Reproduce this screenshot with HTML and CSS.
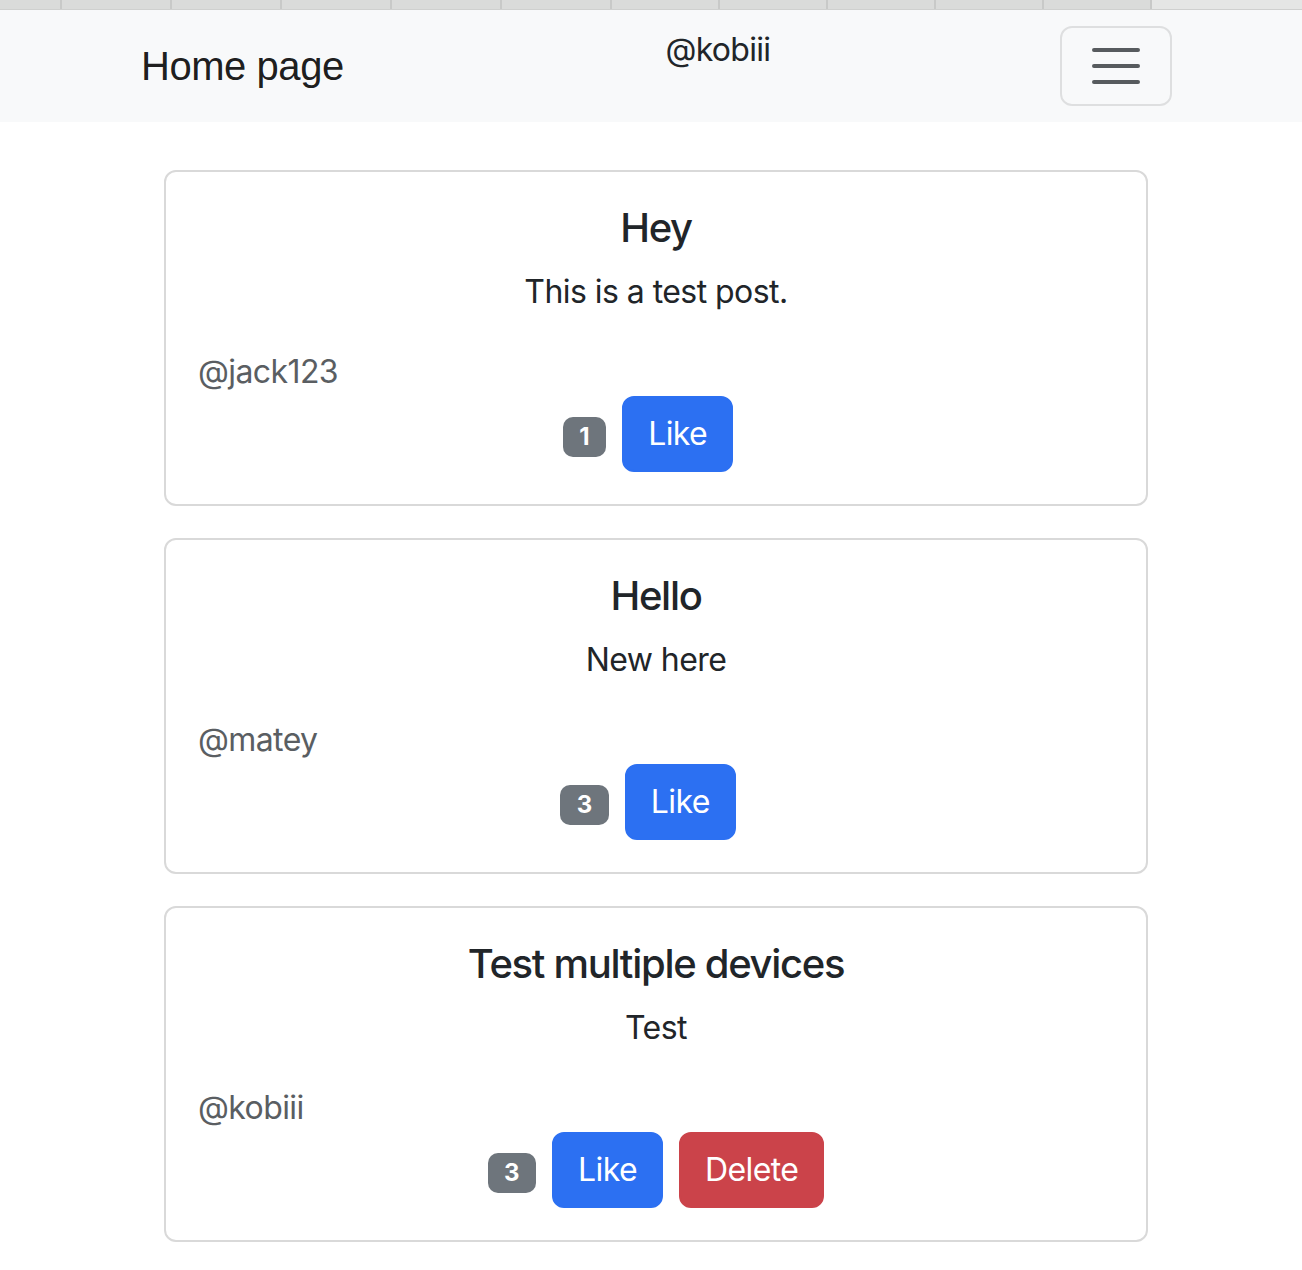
FILE: index.html
```html
<!DOCTYPE html>
<html lang="en">
<head>
<meta charset="utf-8">
<title>Home page</title>
<link rel="stylesheet" href="styles.css">
</head>
<body>
<div class="tabstrip">
  <div class="tab tab-first"></div>
  <div class="tab tab-wide"></div>
  <div class="tab tab-wide"></div>
  <div class="tab tab-wide"></div>
  <div class="tab tab-wide"></div>
  <div class="tab tab-wide"></div>
  <div class="tab tab-narrow"></div>
  <div class="tab tab-narrow"></div>
  <div class="tab tab-narrow"></div>
  <div class="tab tab-narrow"></div>
  <div class="tab tab-narrow"></div>
  <div class="tab tab-rest"></div>
</div>
<nav class="navbar">
  <div class="nav-inner">
    <a class="brand">Home page</a>
    <span class="nav-user">@kobiii</span>
    <button class="toggler" type="button" aria-label="Toggle navigation">
      <svg class="toggler-icon" viewBox="0 0 30 30" width="60" height="60">
        <path d="M4 7h22M4 15h22M4 23h22" stroke="rgba(33,37,41,0.75)" stroke-width="2" stroke-linecap="round" fill="none"/>
      </svg>
    </button>
  </div>
</nav>
<main class="feed">
  <div class="card">
    <h5 class="card-title">Hey</h5>
    <p class="card-text">This is a test post.</p>
    <div class="author">@jack123</div>
    <div class="actions">
      <span class="badge">1</span>
      <button class="btn btn-like">Like</button>
      <span class="spacer"></span>
    </div>
  </div>
  <div class="card">
    <h5 class="card-title">Hello</h5>
    <p class="card-text">New here</p>
    <div class="author">@matey</div>
    <div class="actions">
      <span class="badge">3</span>
      <button class="btn btn-like">Like</button>
      <span class="spacer"></span>
    </div>
  </div>
  <div class="card">
    <h5 class="card-title">Test multiple devices</h5>
    <p class="card-text">Test</p>
    <div class="author">@kobiii</div>
    <div class="actions">
      <span class="badge">3</span>
      <button class="btn btn-like">Like</button>
      <button class="btn btn-delete">Delete</button>
    </div>
  </div>
</main>
</body>
</html>
```
FILE: styles.css
```css
html, body {
  margin: 0;
  padding: 0;
  background: #ffffff;
}
body {
  font-family: Inter, "Noto Sans", sans-serif;
  color: #212529;
}
.tabstrip {
  display: flex;
  height: 10px;
  background: #dadbda;
  border-bottom: 1px solid #cfd0cf;
  box-sizing: border-box;
}
.tab {
  box-sizing: border-box;
  height: 100%;
  border-right: 2px solid #c8c9c8;
}
.tab-first { width: 62px; }
.tab-wide { width: 110px; }
.tab-narrow { width: 108px; }
.tab-rest {
  flex: 1;
  border-right: none;
  background: #e5e6e5;
}
.navbar {
  background: #f8f9fa;
  padding: 16px 0;
}
.nav-inner {
  margin-left: 141px;
  width: 1031px;
  display: flex;
  justify-content: space-between;
  align-items: flex-start;
}
.brand {
  font-family: "Liberation Sans", Arial, sans-serif;
  font-size: 40px;
  line-height: 60px;
  letter-spacing: -0.45px;
  padding: 10px 0;
  margin-right: 32px;
  color: rgba(0, 0, 0, 0.9);
}
.nav-user {
  font-size: 32px;
  line-height: 48px;
  letter-spacing: -0.7px;
  color: #212529;
}
.toggler {
  box-sizing: border-box;
  width: 112px;
  height: 80px;
  padding: 8px 24px;
  background: transparent;
  border: 2px solid rgba(0, 0, 0, 0.1);
  border-radius: 12px;
  display: flex;
  align-items: center;
  justify-content: center;
}
.toggler-icon {
  display: block;
}
.feed {
  padding-top: 48px;
}
.card {
  box-sizing: border-box;
  margin: 0 0 32px 164px;
  width: 984px;
  border: 2px solid #d9d9d9;
  border-radius: 12px;
  padding: 32px;
  text-align: center;
}
.card-title {
  margin: 0 0 16px;
  font-size: 40px;
  font-weight: 500;
  line-height: 1.2;
  letter-spacing: -1.3px;
  color: #212529;
}
.card-text {
  margin: 0 0 32px;
  font-size: 32px;
  line-height: 48px;
  letter-spacing: -0.55px;
}
.author {
  text-align: left;
  font-size: 32px;
  line-height: 48px;
  letter-spacing: -0.6px;
  color: #5a5e62;
}
.actions {
  display: flex;
  justify-content: center;
  align-items: baseline;
  gap: 16px;
}
.spacer {
  width: 0;
}
.badge {
  display: inline-block;
  background: #6e757c;
  color: #ffffff;
  font-size: 24px;
  font-weight: 700;
  line-height: 1;
  padding: 8px 16.5px;
  border-radius: 10px;
}
.btn {
  font-family: Inter, "Noto Sans", sans-serif;
  font-size: 32px;
  line-height: 48px;
  letter-spacing: -0.6px;
  padding: 12px 24px;
  border: 2px solid transparent;
  border-radius: 12px;
  color: #ffffff;
}
.btn-like {
  background: #2c70f2;
  border-color: #2c70f2;
}
.btn-delete {
  background: #cb434a;
  border-color: #cb434a;
}
```
